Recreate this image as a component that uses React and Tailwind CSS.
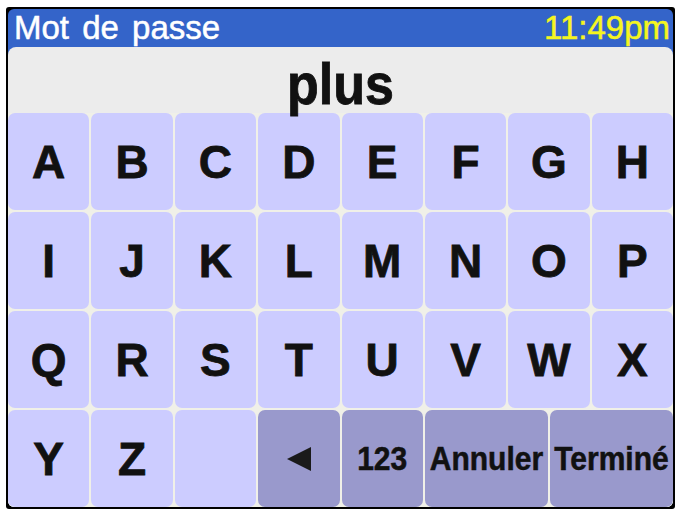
export default function App() {
  const rows = [
    ['A', 'B', 'C', 'D', 'E', 'F', 'G', 'H'],
    ['I', 'J', 'K', 'L', 'M', 'N', 'O', 'P'],
    ['Q', 'R', 'S', 'T', 'U', 'V', 'W', 'X'],
  ];

  const lightKey =
    'col-span-2 flex items-center justify-center rounded-[7px] bg-[#ccccff] text-[46px] font-bold text-[#111] leading-none [-webkit-text-stroke:0.8px_#111]';
  const darkKey =
    'flex items-center justify-center rounded-[7px] bg-[#9999cc] text-[30px] font-bold text-[#111] leading-none [-webkit-text-stroke:0.5px_#111]';

  return (
    <div
      className="w-[681px] h-[512px] bg-white pt-[7px] pl-[6px]"
      style={{ fontFamily: '"Liberation Sans", Arial, sans-serif' }}
    >
      <div className="w-[669px] h-[502px] bg-black p-[2px] rounded-[3px]">
        <div className="h-full flex flex-col bg-[#3464c9] rounded-[6px] overflow-hidden">
          {/* title bar */}
          <header className="h-[38px] shrink-0 flex items-center justify-between pl-[6px] pr-[3px] text-[33px] leading-[38px] [-webkit-text-stroke:0.5px_currentColor]">
            <span className="text-white [word-spacing:4px]">Mot de passe</span>
            <span className="text-[#f5f51e]">11:49pm</span>
          </header>

          <div className="flex-1 flex flex-col bg-[#ececec] rounded-t-[8px]">
            {/* entered text */}
            <div className="h-[66px] shrink-0 flex items-center justify-center pt-[8px]">
              <span className="inline-block scale-y-110 text-[52px] font-bold leading-none text-[#111] [-webkit-text-stroke:0.8px_#111]">
                plus
              </span>
            </div>

            {/* keyboard */}
            <div className="flex-1 grid grid-cols-16 grid-rows-4 gap-[2px] bg-[#f0f0e8]">
              {rows.flat().map((k) => (
                <div key={k} className={lightKey}>
                  {k}
                </div>
              ))}
              <div className={lightKey}>Y</div>
              <div className={lightKey}>Z</div>
              <div className={lightKey}></div>
              <div className={`${darkKey} col-span-2`}>
                <svg width="26" height="26" viewBox="0 0 26 26">
                  <polygon points="1,13 25,1 25,25" fill="#1a1a1a" />
                </svg>
              </div>
              <div className={`${darkKey} col-span-2`}>
                <span className="inline-block scale-y-110">123</span>
              </div>
              <div className={`${darkKey} col-span-3`}>
                <span className="inline-block scale-y-110">Annuler</span>
              </div>
              <div className={`${darkKey} col-span-3`}>
                <span className="inline-block scale-y-110">Terminé</span>
              </div>
            </div>
          </div>
        </div>
      </div>
    </div>
  );
}
